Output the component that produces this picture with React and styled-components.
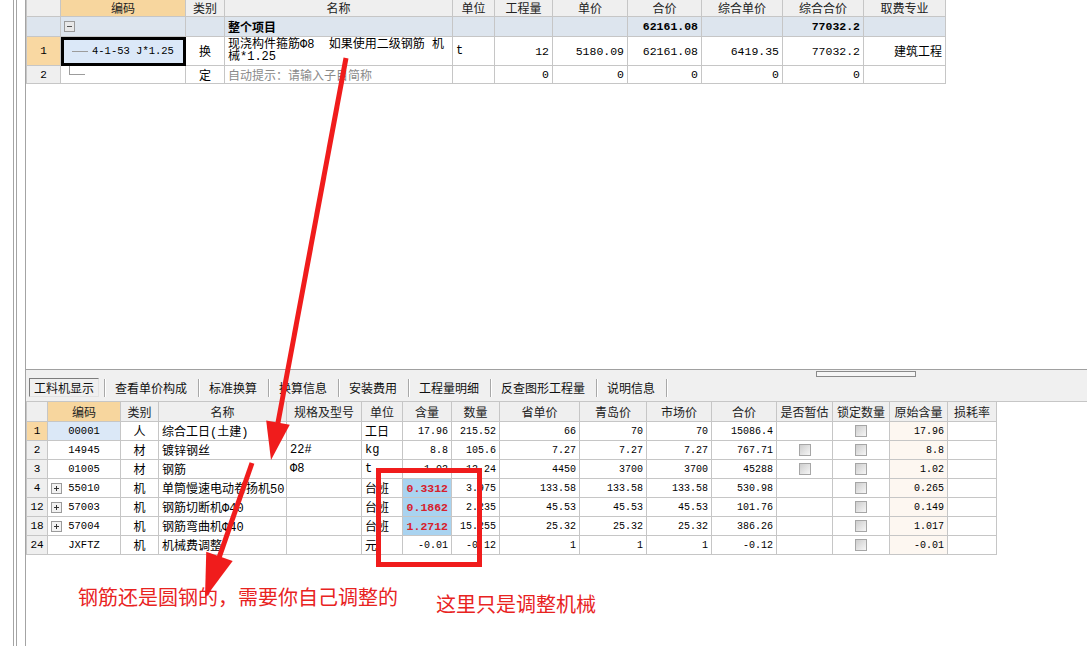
import styled, { createGlobalStyle } from 'styled-components'

const LINE = '#c6c6c6'
const HEAD = '#efefef'
const HOT = '#f7d69e'
const RED = '#f01c1c'

const GlobalStyle = createGlobalStyle`
    html, body {
        margin: 0;
        padding: 0;
        background: #fff;
    }
    body {
        font-family: 'Liberation Mono', 'Noto Sans CJK SC', monospace;
        font-size: 12px;
        color: #000;
    }
`

const topCols = [34, 125, 39, 228, 42, 58, 75, 74, 81, 81, 82]
const matCols = [21, 73, 38, 128, 75, 41, 49, 48, 80, 67, 65, 65, 56, 57, 58, 49]

const topHead = ['', '编码', '类别', '名称', '单位', '工程量', '单价', '合价', '综合单价', '综合合价', '取费专业']
const matHead = ['', '编码', '类别', '名称', '规格及型号', '单位', '含量', '数量', '省单价', '青岛价', '市场价', '合价', '是否暂估', '锁定数量', '原始含量', '损耗率']

const matRows = [
    { no: '1', hot: true, code: '00001', kind: '人', name: '综合工日(土建)', spec: '', unit: '工日', qty: '17.96', amount: '215.52', prices: ['66', '70', '70'], total: '15086.4', lock: true, orig: '17.96' },
    { no: '2', code: '14945', kind: '材', name: '镀锌钢丝', spec: '22#', unit: 'kg', qty: '8.8', amount: '105.6', prices: ['7.27', '7.27', '7.27'], total: '767.71', est: true, lock: true, orig: '8.8' },
    { no: '3', code: '01005', kind: '材', name: '钢筋', spec: 'Φ8', unit: 't', qty: '1.02', amount: '12.24', prices: ['4450', '3700', '3700'], total: '45288', est: true, lock: true, orig: '1.02' },
    { no: '4', exp: true, code: '55010', kind: '机', name: '单筒慢速电动卷扬机50', spec: '', unit: '台班', qty: '0.3312', hl: true, amount: '3.975', prices: ['133.58', '133.58', '133.58'], total: '530.98', lock: true, orig: '0.265' },
    { no: '12', exp: true, code: '57003', kind: '机', name: '钢筋切断机Φ40', spec: '', unit: '台班', qty: '0.1862', hl: true, amount: '2.235', prices: ['45.53', '45.53', '45.53'], total: '101.76', lock: true, orig: '0.149' },
    { no: '18', exp: true, code: '57004', kind: '机', name: '钢筋弯曲机Φ40', spec: '', unit: '台班', qty: '1.2712', hl: true, amount: '15.255', prices: ['25.32', '25.32', '25.32'], total: '386.26', lock: true, orig: '1.017' },
    { no: '24', code: 'JXFTZ', kind: '机', name: '机械费调整', spec: '', unit: '元', qty: '-0.01', amount: '-0.12', prices: ['1', '1', '1'], total: '-0.12', lock: true, orig: '-0.01' },
]

const tabs = ['工料机显示', '查看单价构成', '标准换算', '换算信息', '安装费用', '工程量明细', '反查图形工程量', '说明信息']

// arrow shaft + head, the head lies on the end point
const arrow = (x1, y1, x2, y2, len, half) => {
    const d = Math.hypot(x2 - x1, y2 - y1)
    const ux = (x2 - x1) / d
    const uy = (y2 - y1) / d
    const bx = x2 - ux * len
    const by = y2 - uy * len
    const px = -uy * half
    const py = ux * half
    return {
        shaft: { x1, y1, x2: bx + ux * 2, y2: by + uy * 2 },
        head: `${x2},${y2} ${bx + px},${by + py} ${bx - px},${by - py}`,
    }
}

const arrows = [arrow(346, 58, 271, 460, 38, 12), arrow(252, 463, 205, 598, 44, 14)]

export default function App() {
    return (
        <Screen>
            <GlobalStyle />
            <Rail />
            <Main>
                <TopPane>
                    <Sheet>
                        <Row $cols={topCols} $h={17}>
                            {topHead.map((h, i) => (
                                <HeadCell key={i} $hot={i === 1}>
                                    {h}
                                </HeadCell>
                            ))}
                        </Row>
                        <Row $cols={topCols} $h={20} $bg="#dde5ee">
                            <Cell />
                            <Cell $align="left">
                                <Toggle />
                            </Cell>
                            <Cell />
                            <Cell $align="left" $bold>
                                整个项目
                            </Cell>
                            <Cell />
                            <Cell />
                            <Cell />
                            <Cell $align="right" $bold $fs={11.5}>
                                62161.08
                            </Cell>
                            <Cell />
                            <Cell $align="right" $bold $fs={11.5}>
                                77032.2
                            </Cell>
                            <Cell />
                        </Row>
                        <Row $cols={topCols} $h={29}>
                            <RowHead $hot>1</RowHead>
                            <TreeCell $selected>
                                <Branch />
                                <span>4-1-53 J*1.25</span>
                            </TreeCell>
                            <Cell>换</Cell>
                            <NameCell>
                                <span>现浇构件箍筋Φ8&nbsp; 如果使用二级钢筋 机</span>
                                <span>械*1.25</span>
                            </NameCell>
                            <Cell $align="left">t</Cell>
                            <Cell $align="right" $fs={11.5}>12</Cell>
                            <Cell $align="right" $fs={11.5}>5180.09</Cell>
                            <Cell $align="right" $fs={11.5}>62161.08</Cell>
                            <Cell $align="right" $fs={11.5}>6419.35</Cell>
                            <Cell $align="right" $fs={11.5}>77032.2</Cell>
                            <Cell $align="right">建筑工程</Cell>
                        </Row>
                        <Row $cols={topCols} $h={18}>
                            <RowHead>2</RowHead>
                            <TreeCell $last>
                                <Branch $corner />
                            </TreeCell>
                            <Cell>定</Cell>
                            <Cell $align="left" $color="#8a8a8a">
                                自动提示：请输入子目简称
                            </Cell>
                            <Cell />
                            <Cell $align="right" $fs={11.5}>0</Cell>
                            <Cell $align="right" $fs={11.5}>0</Cell>
                            <Cell $align="right" $fs={11.5}>0</Cell>
                            <Cell $align="right" $fs={11.5}>0</Cell>
                            <Cell $align="right" $fs={11.5}>0</Cell>
                            <Cell />
                        </Row>
                    </Sheet>
                </TopPane>
                <TabStrip>
                    <Grip />
                    <Tabs>
                        {tabs.map((t, i) => (
                            <TabGroup key={t}>
                                {i > 0 && <Sep />}
                                <Tab $active={i === 0}>{t}</Tab>
                            </TabGroup>
                        ))}
                        <Sep />
                    </Tabs>
                </TabStrip>
                <Sheet>
                    <Row $cols={matCols} $h={20}>
                        {matHead.map((h, i) => (
                            <HeadCell key={i} $hot={i === 1}>
                                {h}
                            </HeadCell>
                        ))}
                    </Row>
                    {matRows.map((r) => (
                        <Row key={r.no} $cols={matCols} $h={19}>
                            <RowHead $hot={r.hot}>{r.no}</RowHead>
                            <CodeCell $bg={r.hot ? '#dbe8f7' : undefined}>
                                <span>{r.exp && <Expander />}</span>
                                <span>{r.code}</span>
                            </CodeCell>
                            <Cell>{r.kind}</Cell>
                            <Cell $align="left">{r.name}</Cell>
                            <Cell $align="left">{r.spec}</Cell>
                            <Cell $align="left">{r.unit}</Cell>
                            <Cell
                                $align="right"
                                $fs={r.hl ? 11.5 : 10}
                                $bold={r.hl}
                                $color={r.hl ? '#d8202c' : undefined}
                                $bg={r.hl ? '#a9d3f0' : undefined}
                            >
                                {r.qty}
                            </Cell>
                            <Cell $align="right" $fs={10}>{r.amount}</Cell>
                            {r.prices.map((p, i) => (
                                <Cell key={i} $align="right" $fs={10}>
                                    {p}
                                </Cell>
                            ))}
                            <Cell $align="right" $fs={10}>{r.total}</Cell>
                            <Cell>{r.est && <Check />}</Cell>
                            <Cell>{r.lock && <Check />}</Cell>
                            <Cell $align="right" $fs={10} $bg="#fdf7f1">
                                {r.orig}
                            </Cell>
                            <Cell />
                        </Row>
                    ))}
                </Sheet>
                <Notes>
                    <Note>钢筋还是圆钢的，需要你自己调整的</Note>
                    <Note $drop>这里只是调整机械</Note>
                </Notes>
            </Main>
            <Markup width="1087" height="646" viewBox="0 0 1087 646">
                {arrows.map((a, i) => (
                    <g key={i}>
                        <line {...a.shaft} stroke={RED} strokeWidth="5" />
                        <polygon points={a.head} fill={RED} />
                    </g>
                ))}
                <rect x="378.5" y="470.5" width="101" height="94" fill="none" stroke={RED} strokeWidth="5" />
            </Markup>
        </Screen>
    )
}

const Screen = styled.div`
    position: relative;
    display: flex;
    width: 1087px;
    height: 646px;
    overflow: hidden;
    background: #fff;
`
const Rail = styled.div`
    flex: 0 0 26px;
    background: linear-gradient(
        to right,
        transparent 13px,
        #a4a4a4 13px,
        #a4a4a4 14px,
        transparent 14px,
        transparent 16px,
        #a4a4a4 16px,
        #a4a4a4 17px,
        transparent 17px,
        transparent 25px,
        #a4a4a4 25px
    );
`
const Main = styled.div`
    flex: 1;
    display: flex;
    flex-direction: column;
    min-width: 0;
`
const TopPane = styled.div`
    height: 369px;
    border-bottom: 1px solid #a0a0a0;
    flex-shrink: 0;
`
const Sheet = styled.div`
    display: flex;
    flex-direction: column;
    width: max-content;
    border-left: 1px solid ${LINE};
`
const Row = styled.div`
    display: grid;
    grid-template-columns: ${(p) => p.$cols.map((w) => `${w}px`).join(' ')};
    height: ${(p) => p.$h}px;
    background: ${(p) => p.$bg || '#fff'};
`
const Cell = styled.div`
    box-sizing: border-box;
    display: flex;
    align-items: center;
    justify-content: ${(p) =>
        p.$align === 'right' ? 'flex-end' : p.$align === 'left' ? 'flex-start' : 'center'};
    padding: 0 3px;
    border-right: 1px solid ${LINE};
    border-bottom: 1px solid ${LINE};
    overflow: hidden;
    white-space: nowrap;
    font-size: ${(p) => p.$fs || 12}px;
    font-weight: ${(p) => (p.$bold ? 700 : 400)};
    color: ${(p) => p.$color || 'inherit'};
    background: ${(p) => p.$bg || 'transparent'};
`
const HeadCell = styled(Cell)`
    background: ${(p) => (p.$hot ? HOT : HEAD)};
    color: #222;
`
const RowHead = styled(Cell)`
    background: ${(p) => (p.$hot ? '#f9d8a2' : HEAD)};
    font-size: 11px;
`
const TreeCell = styled(Cell)`
    justify-content: flex-start;
    align-items: ${(p) => (p.$last ? 'flex-start' : 'center')};
    padding-left: ${(p) => (p.$last ? 8 : 11)}px;
    font-size: 10.5px;
    background: ${(p) => (p.$selected ? '#dbe8f8' : 'transparent')};
    outline: ${(p) => (p.$selected ? '3px solid #000' : 'none')};
    outline-offset: -3px;
`
const Branch = styled.span`
    width: ${(p) => (p.$corner ? 15 : 16)}px;
    height: ${(p) => (p.$corner ? 8 : 0)}px;
    margin-right: 4px;
    border-bottom: 1px solid #9c9c9c;
    border-left: ${(p) => (p.$corner ? '1px solid #9c9c9c' : 'none')};
`
const NameCell = styled(Cell)`
    flex-direction: column;
    align-items: flex-start;
    justify-content: center;
    padding: 0 2px 1px 3px;
    line-height: 12px;
    overflow: visible;
`
const CodeCell = styled(Cell)`
    display: grid;
    grid-template-columns: 1fr auto 1fr;
    align-items: center;
    font-size: 10.5px;
`
const Toggle = styled.span`
    position: relative;
    box-sizing: border-box;
    width: 11px;
    height: 11px;
    border: 1px solid #9a9a9a;
    background: #e8e8e8;
    &::after {
        content: '';
        position: absolute;
        left: 2px;
        right: 2px;
        top: 4px;
        border-top: 1px solid #555;
    }
`
const Expander = styled(Toggle)`
    display: block;
    background: #f2f2f2;
    &::before {
        content: '';
        position: absolute;
        top: 2px;
        bottom: 2px;
        left: 4px;
        border-left: 1px solid #333;
    }
    &::after {
        border-top-color: #333;
    }
`
const Check = styled.span`
    box-sizing: border-box;
    width: 12px;
    height: 12px;
    border: 1px solid #a6a6a6;
    background: linear-gradient(135deg, #cdcdcd, #f6f6f6);
`
const TabStrip = styled.div`
    height: 31px;
    flex-shrink: 0;
    background: #f0f0f0;
    border-bottom: 1px solid ${LINE};
`
const Grip = styled.div`
    box-sizing: border-box;
    width: 100px;
    height: 6px;
    margin: 1px 0 0 790px;
    border: 1px solid #8a8a8a;
    background: #f6f6f6;
`
const Tabs = styled.div`
    display: flex;
    align-items: center;
    height: 19px;
    margin-top: 1px;
    padding-left: 3px;
    font-family: 'Noto Sans CJK SC', sans-serif;
    font-size: 12px;
    color: #111;
`
const TabGroup = styled.div`
    display: flex;
    align-items: center;
`
const Tab = styled.div`
    box-sizing: border-box;
    height: 19px;
    display: flex;
    align-items: center;
    padding: ${(p) => (p.$active ? '0 4px' : '0 11px 0 9px')};
    margin-right: ${(p) => (p.$active ? 5 : 0)}px;
    border: ${(p) => (p.$active ? '1px solid' : 'none')};
    border-color: #7c7c7c #e2e2e2 #e2e2e2 #7c7c7c;
`
const Sep = styled.span`
    height: 18px;
    border-left: 1px solid #a8a8a8;
    border-right: 1px solid #fff;
`
const Notes = styled.div`
    display: flex;
    align-items: flex-start;
    padding: 31px 0 0 52px;
`
const Note = styled.div`
    font-family: 'Noto Sans CJK SC', sans-serif;
    font-size: 20px;
    line-height: 22px;
    color: #e8231f;
    margin-left: ${(p) => (p.$drop ? 38 : 0)}px;
    margin-top: ${(p) => (p.$drop ? 7 : 0)}px;
`
const Markup = styled.svg`
    position: absolute;
    left: 0;
    top: 0;
    pointer-events: none;
`
